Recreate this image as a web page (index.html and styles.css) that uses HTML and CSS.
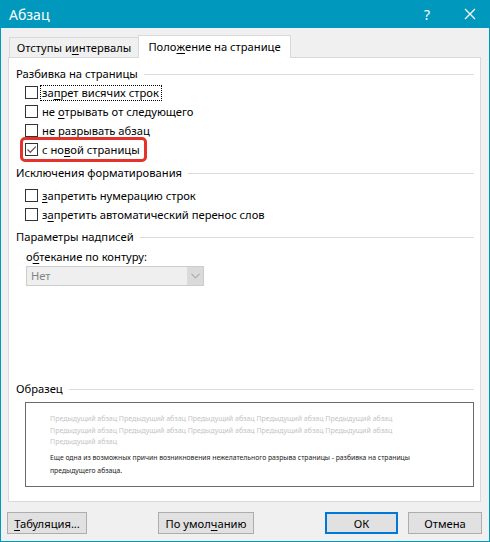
FILE: index.html
```html
<!DOCTYPE html>
<html lang="ru">
<head>
<meta charset="utf-8">
<title>Абзац</title>
<link rel="stylesheet" href="styles.css">
</head>
<body>
<div class="window">
  <div class="titlebar">
    <span class="title">Абзац</span>
    <span class="help">?</span>
    <svg class="close" width="12" height="12" viewBox="0 0 12 12"><path d="M1 1L11 11M11 1L1 11" stroke="#fff" stroke-width="1.3" fill="none"/></svg>
  </div>
  <div class="tabs">
    <div class="tab">Отступы и <u>и</u>нтервалы</div>
    <div class="tab active">Поло<u>ж</u>ение на странице</div>
  </div>
  <div class="panel">
    <div class="group first"><span>Разбивка на страницы</span><i class="rule"></i></div>
    <div class="row"><span class="box"></span><span class="lbl focus">за<u>п</u>рет висячих строк</span></div>
    <div class="row"><span class="box"></span><span class="lbl">не <u>о</u>трывать от следующего</span></div>
    <div class="row"><span class="box"></span><span class="lbl"><u>н</u>е разрывать абзац</span></div>
    <div class="row marked"><span class="box"><svg width="11" height="11" viewBox="0 0 11 11"><path d="M1.5 5.5L4.3 8.3L9.8 2.6" stroke="#6e5a5a" stroke-width="1.3" fill="none"/></svg></span><span class="lbl">с но<u>в</u>ой страницы</span><span class="redmark"></span></div>
    <div class="group g2"><span>Исключения форматирования</span><i class="rule"></i></div>
    <div class="row"><span class="box"></span><span class="lbl"><u>з</u>апретить нумерацию строк</span></div>
    <div class="row"><span class="box"></span><span class="lbl">з<u>а</u>претить автоматический перенос слов</span></div>
    <div class="group g3"><span>Параметры надписей</span><i class="rule"></i></div>
    <div class="field-label">о<u>б</u>текание по контуру:</div>
    <div class="select"><span class="val">Нет</span><span class="arrow"><svg width="9" height="6" viewBox="0 0 9 6"><path d="M0.5 0.8L4.5 4.8L8.5 0.8" stroke="#a8a8a8" stroke-width="1.1" fill="none"/></svg></span></div>
    <div class="spacer"></div>
    <div class="group"><span>Образец</span><i class="rule"></i></div>
    <div class="preview">
      <p class="prev">Предыдущий абзац Предыдущий абзац Предыдущий абзац Предыдущий абзац Предыдущий абзац Предыдущий абзац Предыдущий абзац Предыдущий абзац Предыдущий абзац Предыдущий абзац Предыдущий абзац</p>
      <p class="cur">Еще одна из возможных причин возникновения нежелательного разрыва страницы - разбивка на страницы предыдущего абзаца.</p>
    </div>
  </div>
  <div class="footer">
    <button class="btn b1"><u>Т</u>абуляция...</button>
    <button class="btn b2">По умол<u>ч</u>анию</button>
    <button class="btn b3 default">ОК</button>
    <button class="btn b4">Отмена</button>
  </div>
</div>
</body>
</html>
```
FILE: styles.css
```css
* { box-sizing: border-box; }
html, body { margin: 0; padding: 0; }
body {
  width: 490px;
  height: 542px;
  font-family: "Noto Sans", "Open Sans", sans-serif;
  font-size: 11.2px;
  color: #000;
  overflow: hidden;
}
u { text-decoration: underline; text-underline-offset: 2px; text-decoration-thickness: 1px; }
.window {
  width: 490px;
  height: 542px;
  background: #f0f0f0;
  border: 1px solid #0098bd;
  border-top: none;
  display: flex;
  flex-direction: column;
}
.titlebar {
  height: 28px;
  margin: 0 -1px;
  background: #0098bd;
  color: #fff;
  display: flex;
  align-items: center;
  padding-left: 9px;
}
.title { font-size: 14px; flex: 1; }
.help { font-size: 14px; margin-right: 34px; }
.close { margin-right: 14px; }
.tabs {
  display: flex;
  align-items: flex-end;
  height: 29px;
  padding-left: 8px;
}
.tab {
  height: 20px;
  width: 129px;
  border: 1px solid #d9d9d9;
  border-bottom: none;
  border-right: none;
  background: #f0f0f0;
  display: flex;
  align-items: center;
  justify-content: center;
  padding-bottom: 1px;
  white-space: nowrap;
}
.tab.active {
  height: 23px;
  width: 153px;
  background: #fff;
  border-right: 1px solid #d9d9d9;
  margin-bottom: -1px;
  position: relative;
  z-index: 1;
  padding-bottom: 2px;
}
.panel {
  margin-left: 7px;
  width: 473px;
  height: 445px;
  background: #fff;
  border: 1px solid #d9d9d9;
  display: flex;
  flex-direction: column;
  padding: 0 6px 14px 0;
}
.group {
  display: flex;
  align-items: center;
  height: 19px;
  padding-left: 7px;
  white-space: nowrap;
}
.group.first { margin-top: 6px; }
.group.g2 { margin-top: 4px; }
.group.g3 { margin-top: 3px; }
.rule { flex: 1; height: 1px; background: #dcdcdc; margin-left: 6px; margin-top: 1px; }
.row {
  display: flex;
  align-items: center;
  height: 19px;
  padding-left: 16px;
  white-space: nowrap;
}
.g2 + .row { margin-top: 4px; }
.box {
  width: 13px;
  height: 13px;
  border: 1px solid #333;
  background: #fff;
  display: flex;
  align-items: center;
  justify-content: center;
  flex: none;
}
.lbl {
  margin-left: 2px;
  padding: 0 2px 1px 1px;
  border: 1px dotted transparent;
  line-height: 13px;
}
.lbl.focus { border-color: #000; }
.marked { position: relative; }
.redmark {
  position: absolute;
  left: 11px;
  top: -3px;
  width: 127px;
  height: 25px;
  border: 3px solid #e5322b;
  border-radius: 5px;
}
.field-label {
  margin-top: 2px;
  height: 17px;
  line-height: 17px;
  padding-left: 17px;
}
.select {
  margin: 1px 0 0 17px;
  width: 178px;
  height: 20px;
  border: 1px solid #cccccc;
  background: #efefef;
  display: flex;
  align-items: stretch;
}
.val { flex: 1; color: #838383; padding-left: 4px; line-height: 18px; }
.arrow {
  width: 16px;
  background: #dadada;
  display: flex;
  align-items: center;
  justify-content: center;
}
.spacer { flex: 1; }
.preview {
  margin: 4px 0 0 16px;
  height: 85px;
  border: 1px solid #6a6a6a;
  padding: 10px 50px 0 24px;
}
.preview p { margin: 0; }
.prev { color: #c4c4c4; line-height: 11.5px; font-size: 7px; }
.cur { color: #222; line-height: 13px; font-size: 6.8px; margin-top: 3px !important; }
.footer {
  display: flex;
  padding: 10px 0 0 6px;
}
.btn {
  height: 22px;
  font: inherit;
  background: #e1e1e1;
  border: 1px solid #adadad;
  color: #000;
  padding: 0;
  white-space: nowrap;
}
.b1 { width: 80px; }
.b2 { width: 96px; margin-left: 71px; }
.b3 { width: 73px; margin-left: 71px; }
.b4 { width: 74px; margin-left: 10px; }
.default { border: 2px solid #0078d7; }
```
